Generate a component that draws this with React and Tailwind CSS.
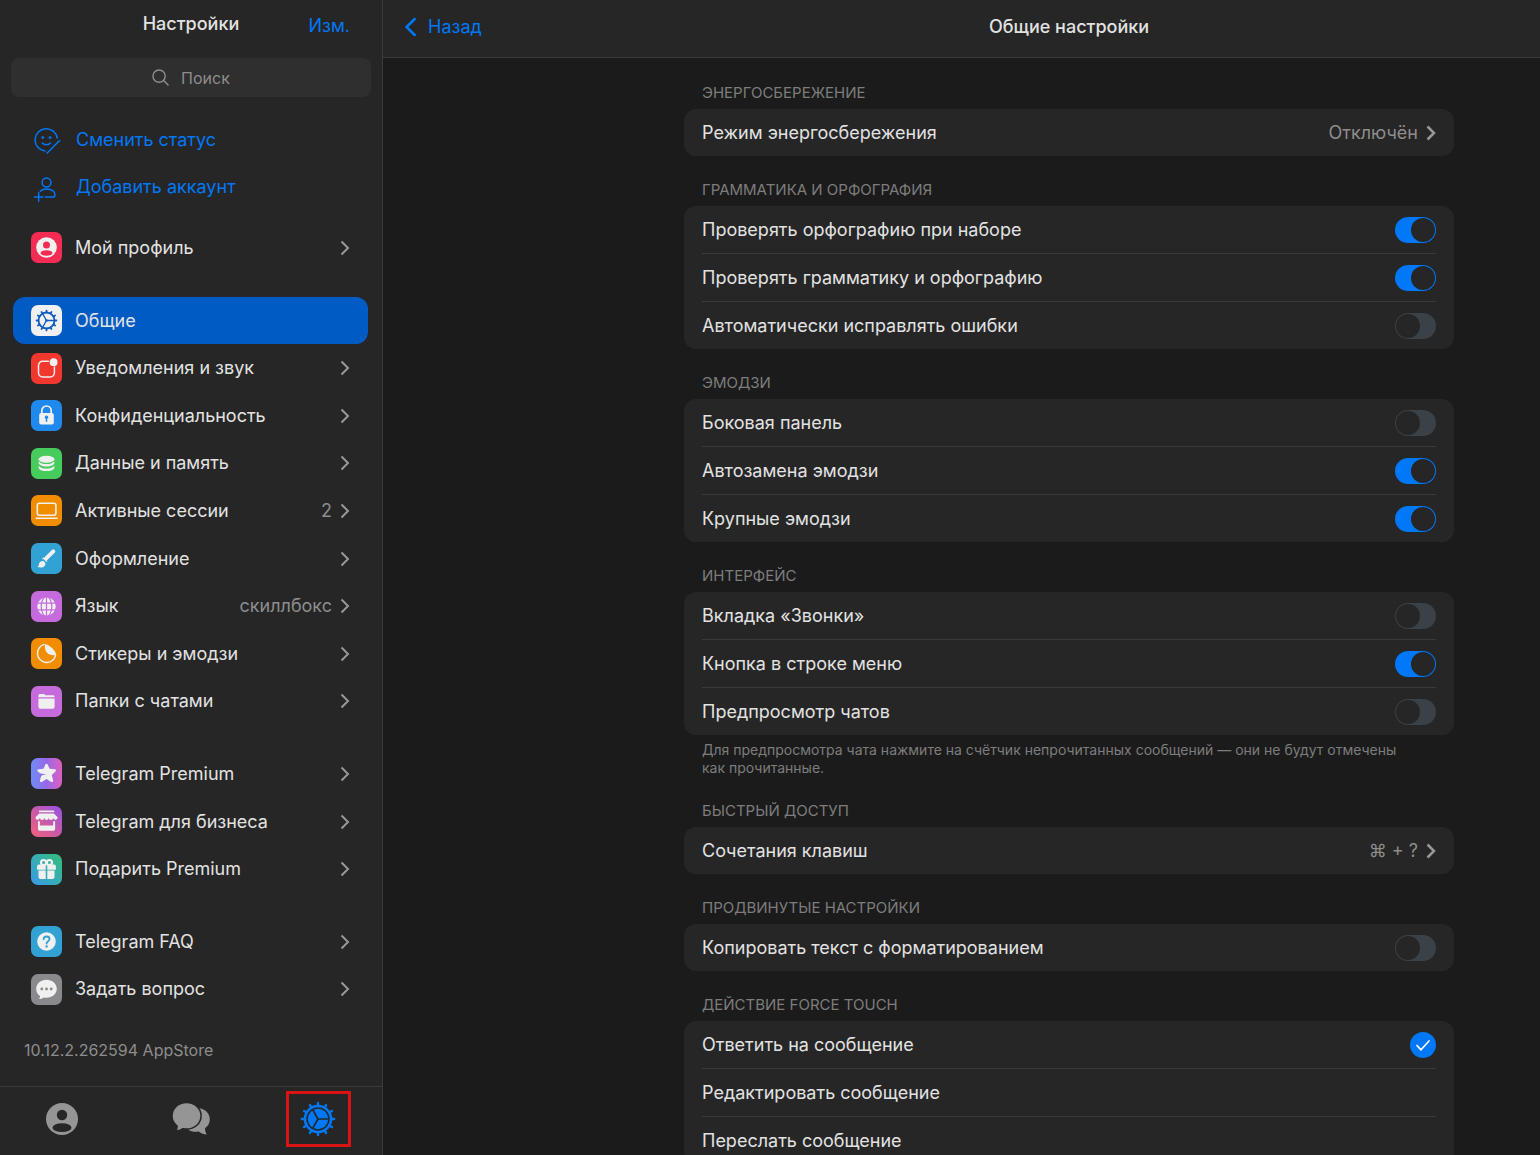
import { useState } from "react";

const TEETH = [0, 30, 60, 90, 120, 150, 180, 210, 240, 270, 300, 330];

function Chevron({ className }) {
  return (
    <svg className={className} width="10" height="16" viewBox="0 0 10 16" fill="none" stroke="currentColor">
      <path d="M1.5 1.5L8 8l-6.5 6.5" />
    </svg>
  );
}

function TileIcon({ name }) {
  switch (name) {
    case "profile":
      return (
        <>
          <circle cx="15.5" cy="15.5" r="10.3" fill="#f0f0f0" />
          <circle cx="15.5" cy="13" r="3.5" fill="#f42c53" />
          <ellipse cx="15.5" cy="21" rx="6" ry="2.8" fill="#f42c53" />
        </>
      );
    case "general":
      return (
        <g stroke="#0d5cc0" fill="none">
          <circle cx="15.5" cy="15.5" r="8" strokeWidth="1.8" />
          {TEETH.map((a) => (
            <path key={a} d="M15.5 7.3V5.6" strokeWidth="1.8" strokeLinecap="round" transform={`rotate(${a} 15.5 15.5)`} />
          ))}
          <path d="M15.5 15.5H23M15.5 15.5l-3.8-6.6M15.5 15.5l-3.8 6.6" strokeWidth="1.3" />
          <circle cx="15.5" cy="15.5" r="1.3" fill="#0d5cc0" stroke="none" />
        </g>
      );
    case "notifications":
      return (
        <>
          <path
            d="M17.5 8.3h-5.800a4.200 4.200 0 00-4.200 4.200v7.300a4.200 4.200 0 004.200 4.200h7.500a4.200 4.200 0 004.200-4.200v-5.800"
            fill="none" stroke="#f0f0f0" strokeWidth="1.5" strokeLinecap="round"
          />
          <circle cx="22.6" cy="9.2" r="3.9" fill="#f0f0f0" />
        </>
      );
    case "privacy":
      return (
        <>
          <path d="M10.8 14v-3.3a4.7 4.7 0 019.4 0V14" fill="none" stroke="#f0f0f0" strokeWidth="1.7" />
          <rect x="8.2" y="13" width="14.6" height="11.6" rx="2" fill="#f0f0f0" />
          <circle cx="15.5" cy="17.2" r="1.7" fill="#2089ee" />
          <path d="M15.5 17v4.3" stroke="#2089ee" strokeWidth="1.5" strokeLinecap="round" />
        </>
      );
    case "storage":
      return (
        <>
          <ellipse cx="15.5" cy="11.3" rx="7.9" ry="3.5" fill="#f0f0f0" />
          <path d="M7.6 13.3c1.7 2 4.5 2.8 7.9 2.8s6.2-.8 7.9-2.8v1.5c0 2.1-3.5 3.7-7.9 3.7s-7.9-1.6-7.9-3.7z" fill="#f0f0f0" />
          <path d="M7.6 17.7c1.7 2 4.5 2.8 7.9 2.8s6.2-.8 7.9-2.8v1.7c0 2.1-3.5 3.7-7.9 3.7s-7.9-1.6-7.9-3.7z" fill="#f0f0f0" />
        </>
      );
    case "sessions":
      return (
        <g fill="none" stroke="#f0f0f0">
          <rect x="6.3" y="8.3" width="18.6" height="12" rx="2.2" strokeWidth="1.6" />
          <path d="M5.2 23.2h20.8" strokeWidth="1.6" strokeLinecap="round" />
        </g>
      );
    case "appearance":
      return (
        <>
          <path d="M14.9 15.6L22.3 8.4" stroke="#f0f0f0" strokeWidth="4" strokeLinecap="round" />
          <path d="M12.2 14.2l4.3 4.1-1.6 1-3.7-3.6z" fill="#f0f0f0" />
          <path d="M6.3 23.8c1.5-.5 1.3-1.6 1.8-3.1.7-2.2 2.6-3.3 4.5-2.5 2 1 2.5 3.2 1 4.9-1.7 1.8-5 1.9-7.3.7z" fill="#f0f0f0" />
          <path d="M12 16.3l3.6 3.5" stroke="#32a1d4" strokeWidth="1.1" />
        </>
      );
    case "language":
      return (
        <>
          <circle cx="15.5" cy="15.5" r="9.2" fill="#f0f0f0" />
          <g fill="none" stroke="#c56bdb" strokeWidth="1.2">
            <path d="M15.5 6v19M6 12.2h19M6 18.8h19" />
            <ellipse cx="15.5" cy="15.5" rx="5.3" ry="10" />
          </g>
        </>
      );
    case "stickers":
      return (
        <>
          <path d="M13.2 6.4A9.2 9.2 0 1024.6 17.5" fill="none" stroke="#f0f0f0" strokeWidth="1.4" strokeLinecap="round" />
          <path d="M14 6.2c3.8 0 11.2 6.3 11 10.7-3.4.7-6.6.3-8.7-1.8-2.3-2.3-2.8-5.5-2.3-8.9z" fill="#f0f0f0" />
        </>
      );
    case "folders":
      return (
        <>
          <path d="M7.4 11.3V9.7c0-1 .7-1.6 1.6-1.6h3.5c1.2 0 1.4 1.2 2.6 1.2h6.9c.9 0 1.6.7 1.6 1.6v.4z" fill="#f0f0f0" />
          <path d="M7.4 12.6h16.2v8.1a2 2 0 01-2 2H9.4a2 2 0 01-2-2z" fill="#f0f0f0" />
        </>
      );
    case "premium":
      return (
        <path
          d="M14.3 6.5c.5-1.1 1.9-1.1 2.4 0l1.9 4.3 5.1.5c1.3.1 1.7 1.5.8 2.3l-3.7 3.3 1.3 5.6c.3 1.2-.8 2-1.9 1.4l-4.7-2.8-4.7 2.8c-1.1.6-2.2-.2-1.9-1.4l.9-3.3c.4-1.5 1.8-2.3 6-3.2-3.5-.1-5.4.1-7.4-1.2l-1.6-1.2c-.9-.8-.5-2.200.8-2.300l4.900-.5z"
          fill="#f0f0f0"
        />
      );
    case "business":
      return (
        <>
          <path d="M8.7 5.3h13.8" stroke="#f0f0f0" strokeWidth="1.7" strokeLinecap="round" />
          <path
            d="M8.2 7.5h14.700l3.700 3.800a2.200 2.200 0 01-4.400.5 2.200 2.200 0 01-4.400 0 2.200 2.200 0 01-4.500 0 2.200 2.200 0 01-4.400 0 2.200 2.200 0 01-4.400-.5z"
            fill="#f0f0f0"
          />
          <path d="M7 15.2v7.700c0 1 .8 1.900 1.900 1.900h13.300c1 0 1.900-.8 1.900-1.900v-7.700h-1.900v4.200H8.900v-4.200z" fill="#f0f0f0" />
        </>
      );
    case "gift":
      return (
        <>
          <g fill="none" stroke="#f0f0f0" strokeWidth="2.2">
            <circle cx="12.6" cy="8.600" r="2.600" />
            <circle cx="18.400" cy="8.600" r="2.600" />
          </g>
          <path d="M8 10.5h6.7v5.2H6.1v-3.2c0-1.1.8-2 1.900-2zM16.300 10.500H23c1.100 0 1.900.9 1.900 2v3.200h-8.600z" fill="#f0f0f0" />
          <path d="M7.5 16.500h7.200v8.600H9.500a2 2 0 01-2-2zM16.300 16.500h7.200v6.600a2 2 0 01-2 2h-5.200z" fill="#f0f0f0" />
        </>
      );
    case "faq":
      return (
        <>
          <circle cx="15.5" cy="15.5" r="9.3" fill="#f0f0f0" />
          <path
            d="M12.6 13.2c.1-1.7 1.3-2.7 3-2.700s2.900 1 2.900 2.500c0 2.200-2.900 2.200-2.900 4.500"
            fill="none" stroke="#32a1d4" strokeWidth="1.8" strokeLinecap="round"
          />
          <circle cx="15.6" cy="20.4" r="1.2" fill="#32a1d4" />
        </>
      );
    case "ask":
      return (
        <>
          <path
            d="M15.5 5.8c5.7 0 10.3 3.9 10.300 9s-4.600 9-10.300 9c-1.100 0-2.100-.1-3.100-.4-1.200 1-2.600 1.700-4.300 1.700.6-.8 1-1.900.9-3-2.300-1.600-3.800-4.300-3.800-7.300 0-5.100 4.600-9 10.300-9z"
            fill="#f0f0f0"
          />
          <g fill="#8a8a8e">
            <circle cx="10.8" cy="15" r="1.4" />
            <circle cx="15.5" cy="15" r="1.4" />
            <circle cx="20.2" cy="15" r="1.4" />
          </g>
        </>
      );
    default:
      return null;
  }
}

function StatusIcon() {
  return (
    <svg className="shrink-0" width="31" height="31" viewBox="0 0 31 31" fill="none" stroke="currentColor" strokeWidth="1.5" strokeLinecap="round">
      <path d="M14 27A11.200 11.200 0 1126.300 14" />
      <path d="M28.900 16.800l-1.200.6L17 28.200l-.8.7" />
      <path d="M11.300 19c1.800 2.200 6.300 2.200 8.200 0" />
      <circle cx="11.800" cy="13.600" r="1.400" fill="currentColor" stroke="none" />
      <circle cx="19" cy="13.600" r="1.400" fill="currentColor" stroke="none" />
    </svg>
  );
}

function AddAccountIcon() {
  return (
    <svg className="shrink-0" width="31" height="31" viewBox="0 0 31 31" fill="none" stroke="currentColor" strokeWidth="1.5" strokeLinecap="round">
      <circle cx="15.5" cy="10.5" r="4.400" />
      <path d="M9.300 19.200c1.500-1.500 3.500-2.200 6.300-2.200 5 0 8.400 2.500 8.400 5.900 0 1.500-.9 2.200-2.300 2.200h-7.200" />
      <path d="M3.500 25h8.500M7.700 20.800v8.500" />
    </svg>
  );
}

function ContactsIcon() {
  return (
    <svg width="34" height="34" viewBox="0 0 34 34">
      <circle cx="17" cy="17" r="16" fill="#959595" />
      <circle cx="17" cy="13" r="5.2" fill="#262626" />
      <ellipse cx="17" cy="25.7" rx="9.5" ry="4.4" fill="#262626" />
    </svg>
  );
}

function ChatsIcon() {
  return (
    <svg width="40" height="34" viewBox="0 0 40 34" fill="#959595">
      <path d="M26 5.8c7.5.6 12.8 5.2 12.8 11.4 0 3.900-1.800 7-4.800 9.100.1 2.800.7 4.600 1.800 6.200-3.300-.2-5.600-1.100-8-3-4.200.6-7.300.2-10.300-1.500z" />
      <path
        d="M15.5.5c8.200 0 14.600 5.800 14.600 13.300 0 7.600-6.500 13.300-14.600 13.300-1.200 0-2.400-.1-3.500-.4-2.400 1.800-4.800 2.400-7.600 2.400 1.200-1.500 1.800-3 1.700-5.100C2.900 21.600 1 18 1 13.800 1 6.300 7.300.5 15.500.5z"
        stroke="#262626" strokeWidth="1.5"
      />
    </svg>
  );
}

function SettingsIcon() {
  return (
    <svg width="36" height="36" viewBox="0 0 36 36" fill="none" stroke="#0078f8">
      <circle cx="18" cy="18" r="13" strokeWidth="2.6" />
      {TEETH.map((a) => (
        <path key={a} d="M18 5V1.9" strokeWidth="2.4" strokeLinecap="round" transform={`rotate(${a} 18 18)`} />
      ))}
      <circle cx="18" cy="18" r="10.200" fill="#0078f8" stroke="none" />
      <path d="M18 18h10.500M18 18l-5.200-9.100M18 18l-5.200 9.100" stroke="#262626" strokeWidth="1.7" />
    </svg>
  );
}

const GROUPS = [
  [{ icon: "profile", label: "Мой профиль", tile: "bg-[#f42c53]" }],
  [
    { icon: "general", label: "Общие", tile: "bg-[#f0f0f0]", active: true },
    { icon: "notifications", label: "Уведомления и звук", tile: "bg-[#f2382e]" },
    { icon: "privacy", label: "Конфиденциальность", tile: "bg-[#2089ee]" },
    { icon: "storage", label: "Данные и память", tile: "bg-[#46cc5c]" },
    { icon: "sessions", label: "Активные сессии", tile: "bg-[#f28d00]", value: "2" },
    { icon: "appearance", label: "Оформление", tile: "bg-[#32a1d4]" },
    { icon: "language", label: "Язык", tile: "bg-[#c56bdb]", value: "скиллбокс" },
    { icon: "stickers", label: "Стикеры и эмодзи", tile: "bg-[#f28d00]" },
    { icon: "folders", label: "Папки с чатами", tile: "bg-[#c56bdb]" },
  ],
  [
    { icon: "premium", label: "Telegram Premium", tile: "bg-linear-to-r from-[#6c8bf8] via-[#9568e8] to-[#e05cc0]" },
    { icon: "business", label: "Telegram для бизнеса", tile: "bg-linear-to-tr from-[#f5607a] via-[#c858a8] to-[#9550e8]" },
    { icon: "gift", label: "Подарить Premium", tile: "bg-linear-to-tr from-[#3a98e8] via-[#38aeb4] to-[#34bc74]" },
  ],
  [
    { icon: "faq", label: "Telegram FAQ", tile: "bg-[#32a1d4]" },
    { icon: "ask", label: "Задать вопрос", tile: "bg-[#8a8a8e]" },
  ],
];

const SECTIONS = [
  {
    title: "ЭНЕРГОСБЕРЕЖЕНИЕ",
    rows: [{ label: "Режим энергосбережения", value: "Отключён" }],
  },
  {
    title: "ГРАММАТИКА И ОРФОГРАФИЯ",
    rows: [
      { label: "Проверять орфографию при наборе", on: true },
      { label: "Проверять грамматику и орфографию", on: true },
      { label: "Автоматически исправлять ошибки", on: false },
    ],
  },
  {
    title: "ЭМОДЗИ",
    rows: [
      { label: "Боковая панель", on: false },
      { label: "Автозамена эмодзи", on: true },
      { label: "Крупные эмодзи", on: true },
    ],
  },
  {
    title: "ИНТЕРФЕЙС",
    rows: [
      { label: "Вкладка «Звонки»", on: false },
      { label: "Кнопка в строке меню", on: true },
      { label: "Предпросмотр чатов", on: false },
    ],
    note: "Для предпросмотра чата нажмите на счётчик непрочитанных сообщений — они не будут отмечены\nкак прочитанные.",
  },
  {
    title: "БЫСТРЫЙ ДОСТУП",
    rows: [{ label: "Сочетания клавиш", value: "⌘ + ?" }],
  },
  {
    title: "ПРОДВИНУТЫЕ НАСТРОЙКИ",
    rows: [{ label: "Копировать текст с форматированием", on: false }],
  },
  {
    title: "ДЕЙСТВИЕ FORCE TOUCH",
    radio: true,
    rows: [
      { label: "Ответить на сообщение" },
      { label: "Редактировать сообщение" },
      { label: "Переслать сообщение" },
    ],
  },
];

function SidebarItem({ item }) {
  return (
    <a
      href="#"
      aria-current={item.active ? "page" : undefined}
      className={`flex min-h-0 flex-1 items-center rounded-xl px-[18px] ${item.active ? "bg-[#005bc4]" : ""}`}
    >
      <span className={`h-[31px] w-[31px] shrink-0 rounded-[7px] ${item.tile}`}>
        <svg width="31" height="31" viewBox="0 0 31 31">
          <TileIcon name={item.icon} />
        </svg>
      </span>
      <span className="ml-[13px] flex-1 truncate">{item.label}</span>
      {item.value && <span className="mr-2 text-[#8d8d8d]">{item.value}</span>}
      {!item.active && <Chevron className="shrink-0 stroke-2 text-[#989898]" />}
    </a>
  );
}

function Sidebar() {
  return (
    <aside className="flex w-[383px] shrink-0 flex-col border-r border-[#3a3a3a] bg-[#262626]">
      <header className="grid h-[58px] shrink-0 grid-cols-[1fr_auto_1fr] px-8 pt-3">
        <h1 className="col-start-2 h-6 leading-6 font-medium">Настройки</h1>
        <button className="h-7 justify-self-end leading-7 text-[#0078f8]">Изм.</button>
      </header>

      <label className="mx-[11px] flex h-[39px] shrink-0 items-center justify-center gap-3 rounded-lg bg-[#2f2f2f] text-[#8d8d8d]">
        <svg width="17" height="17" viewBox="0 0 18 18" fill="none" stroke="currentColor" strokeWidth="1.5">
          <circle cx="7.5" cy="7.5" r="6.5" />
          <path d="M12.3 12.3l4.7 4.7" strokeLinecap="round" />
        </svg>
        <input
          type="text"
          placeholder="Поиск"
          aria-label="Поиск"
          className="field-sizing-content bg-transparent text-base outline-none placeholder:text-[#8d8d8d]"
        />
      </label>

      <nav className="mt-[19px] mr-[14px] ml-[13px] flex min-h-0 flex-1 flex-col">
        <button className="flex min-h-0 flex-1 items-center gap-[14px] px-[18px] text-[#0078f8]">
          <StatusIcon />
          Сменить статус
        </button>
        <button className="flex min-h-0 flex-1 items-center gap-[14px] px-[18px] text-[#0078f8]">
          <AddAccountIcon />
          Добавить аккаунт
        </button>
        {GROUPS.map((group, i) => (
          <div key={i} className="contents">
            <div className={i === 0 ? "h-[13px]" : "h-[25px]"} />
            {group.map((item) => (
              <SidebarItem key={item.icon} item={item} />
            ))}
          </div>
        ))}
      </nav>

      <p className="flex h-[73px] shrink-0 items-center px-6 text-base text-[#8d8d8d]">10.12.2.262594 AppStore</p>

      <footer className="grid h-[69px] shrink-0 grid-cols-3 border-t border-[#3a3a3a]">
        <button aria-label="Контакты" className="flex items-center justify-center pr-1 pb-1">
          <ContactsIcon />
        </button>
        <button aria-label="Чаты" className="flex items-center justify-center pb-1">
          <ChatsIcon />
        </button>
        <button
          aria-label="Настройки"
          className="mt-1 flex h-14 w-[65px] items-center justify-center justify-self-center border-3 border-[#d81414]"
        >
          <SettingsIcon />
        </button>
      </footer>
    </aside>
  );
}

function Switch({ label, on }) {
  return (
    <input
      type="checkbox"
      role="switch"
      aria-label={label}
      defaultChecked={on}
      className="flex h-[26px] w-[41px] shrink-0 appearance-none items-center rounded-full bg-[#3a4147] px-px before:h-6 before:w-6 before:rounded-full before:bg-[#262626] checked:justify-end checked:bg-[#0078f8]"
    />
  );
}

function Row({ row, control }) {
  const cls = "flex h-[47px] w-full items-center justify-between text-left";
  if (row.value) {
    return (
      <button className={cls}>
        <span>{row.label}</span>
        <span className="flex items-center gap-2 text-[#8d8d8d]">
          {row.value}
          <Chevron className="stroke-[2.5px] text-[#989898]" />
        </span>
      </button>
    );
  }
  return (
    <label className={cls}>
      <span>{row.label}</span>
      {control}
    </label>
  );
}

function Section({ section }) {
  const [selected, setSelected] = useState(0);

  return (
    <section className="pb-[22px]">
      <h3 className="mb-1 px-[18px] text-[15px] leading-6 text-[#7d7d7d]">{section.title}</h3>
      <div className="divide-y divide-[#3a3a3a] rounded-xl bg-[#262626] px-[18px]">
        {section.rows.map((row, i) => (
          <div key={row.label}>
            <Row
              row={row}
              control={
                section.radio ? (
                  <span className="relative flex h-[26px] w-[26px]">
                    <input
                      type="radio"
                      name="force-touch"
                      aria-label={row.label}
                      checked={selected === i}
                      onChange={() => setSelected(i)}
                      className="h-full w-full appearance-none rounded-full checked:bg-[#0078f8]"
                    />
                    {selected === i && (
                      <svg className="pointer-events-none absolute inset-0" width="26" height="26" viewBox="0 0 26 26" fill="none" stroke="#fff" strokeWidth="1.7" strokeLinecap="round" strokeLinejoin="round">
                        <path d="M7 13.5l4 4.3 8-8.8" />
                      </svg>
                    )}
                  </span>
                ) : (
                  <Switch label={row.label} on={row.on} />
                )
              }
            />
          </div>
        ))}
      </div>
      {section.note && (
        <p className="mt-[6px] px-[18px] text-sm leading-[18px] whitespace-pre-line text-[#7d7d7d]">{section.note}</p>
      )}
    </section>
  );
}

export default function App() {
  return (
    <div className="flex h-screen overflow-hidden bg-[#1b1b1b] font-['Inter',sans-serif] text-lg text-[#e2e2e2]">
      <Sidebar />
      <main className="flex min-w-0 flex-1 flex-col">
        <header className="grid h-[58px] shrink-0 grid-cols-[301px_1fr_86px] items-center border-b border-[#3a3a3a] bg-[#262626]">
          <button className="flex items-center gap-3 pb-1 pl-[22px] text-[#0078f8]">
            <svg width="11" height="20" viewBox="0 0 11 20" fill="none" stroke="currentColor" strokeWidth="2.5" strokeLinecap="round">
              <path d="M9.7 2L1.5 10l8.2 8" />
            </svg>
            Назад
          </button>
          <h2 className="pb-1 text-center font-medium">Общие настройки</h2>
        </header>
        <div className="min-h-0 flex-1 overflow-y-auto pt-[23px] pr-[86px] pl-[301px] [scrollbar-width:none]">
          {SECTIONS.map((section) => (
            <Section key={section.title} section={section} />
          ))}
        </div>
      </main>
    </div>
  );
}
